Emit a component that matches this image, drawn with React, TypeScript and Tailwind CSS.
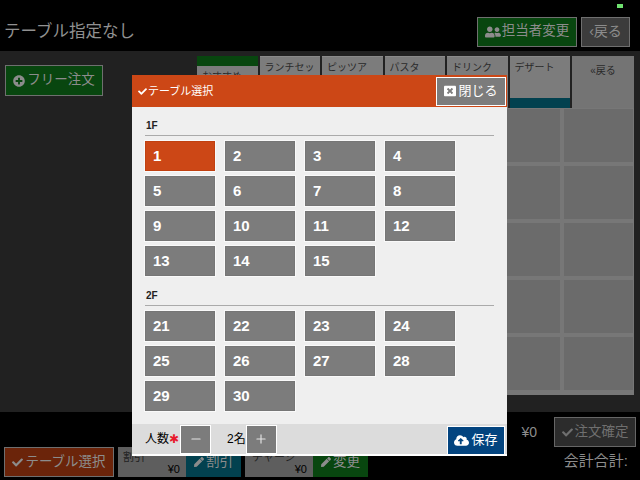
import { Minus, Plus } from 'lucide-react';
import { FaCheck, FaCloudUploadAlt, FaPen, FaPlusCircle, FaUserFriends, FaWindowClose } from 'react-icons/fa';

const FONT = "font-['Liberation_Sans','Noto_Sans_CJK_JP',sans-serif]";

const tabs = [
  { label: 'おすすめ', active: true },
  { label: 'ランチセット' },
  { label: 'ピッツア' },
  { label: 'パスタ' },
  { label: 'ドリンク' },
  { label: 'デザート', teal: true },
];

const floors = [
  { name: '1F', tables: [1, 2, 3, 4, 5, 6, 7, 8, 9, 10, 11, 12, 13, 14, 15] },
  { name: '2F', tables: [21, 22, 23, 24, 25, 26, 27, 28, 29, 30] },
];

const TableButton = ({ n }: { n: number }) => (
  <button
    className={`w-[70px] h-[30px] pl-[7px] flex items-center border text-[15px] font-bold text-white ring-1 ring-white/60 ${
      n === 1 ? 'bg-[#cc4716] border-[#c04010]' : 'bg-[#7c7c7c] border-[#767676]'
    }`}
  >
    {n}
  </button>
);

const TableModal = () => (
  <div className="absolute left-[132px] top-[75px] w-[375px] h-[377px] flex flex-col bg-[#efefef]">
    {/* Title bar */}
    <div className="h-[32px] shrink-0 bg-[#cc4716] flex items-center justify-between pl-[6px] pr-px">
      <div className="flex items-center gap-px text-[11px] text-white">
        <FaCheck size={9} />
        テーブル選択
      </div>
      <button className="w-[70px] h-[29px] border border-white bg-[#7c7c7c] flex items-center justify-center gap-[2px] text-[13px] text-white">
        <FaWindowClose size={12} />
        閉じる
      </button>
    </div>

    {/* Floors */}
    <div className="flex-1 px-[13px] pt-[12px]">
      {floors.map((f) => (
        <div key={f.name} className="mb-[13px]">
          <div className="text-[10px] font-bold leading-[13px] text-[#222] pl-px pb-[3px] border-b border-[#aaa]">{f.name}</div>
          <div className="grid grid-cols-[repeat(4,70px)] gap-x-[10px] gap-y-[5px] mt-[5px]">
            {f.tables.map((n) => (
              <TableButton key={n} n={n} />
            ))}
          </div>
        </div>
      ))}
    </div>

    {/* Footer */}
    <div className="h-[32px] shrink-0 bg-[#dcdcdc] border-b-2 border-white flex items-center pr-[2px]">
      <span className="ml-[13px] text-[12px] text-black">人数</span>
      <span className="w-[9px] text-[12px] text-center text-[#e8192c] leading-none">✱</span>
      <button className="ml-[2px] w-[31px] h-[29px] border border-white bg-[#7c7c7c] flex items-center justify-center text-[#e4e4e4]">
        <Minus size={14} />
      </button>
      <span className="ml-[16px] text-[12px] text-black">2名</span>
      <button className="w-[31px] h-[29px] border border-white bg-[#7c7c7c] flex items-center justify-center text-[#e4e4e4]">
        <Plus size={14} />
      </button>
      <button className="ml-auto mt-[2px] w-[58px] h-[29px] bg-[#03447f] border border-white flex items-center justify-center gap-[2px] text-[13px] text-white">
        <FaCloudUploadAlt size={15} />
        保存
      </button>
    </div>
  </div>
);

const App = () => {
  return (
    <div className={`relative w-[640px] h-[480px] overflow-hidden bg-black ${FONT}`}>
      {/* Top bar */}
      <header className="h-[51px] flex items-center pt-[12px] pl-[4px] pr-[10px] text-[#919191]">
        <h1 className="text-[16.5px] font-normal">テーブル指定なし</h1>
        <button className="ml-auto w-[100px] h-[30px] border border-[#6f6f6f] bg-[#08460f] flex items-center justify-center gap-[1px] text-[13.5px] text-[#8c8c8c]">
          <FaUserFriends size={16} />
          担当者変更
        </button>
        <button className="ml-[4px] w-[49px] h-[30px] border border-[#6f6f6f] bg-[#3c3c3c] text-[14px] text-[#8c8c8c]">
          ‹戻る
        </button>
      </header>

      {/* Main */}
      <main className="h-[361px] bg-[#212121] flex pt-[5px]">
        <div className="w-[197px] pl-[5px] pt-[9px] shrink-0">
          <button className="w-[98px] h-[31px] border border-[#6f6f6f] bg-[#08460f] flex items-center justify-center gap-[2px] text-[13.5px] text-[#8c8c8c]">
            <FaPlusCircle size={12} />
            フリー注文
          </button>
        </div>
        <div className="w-[437px] flex flex-col">
          <div className="flex h-[52px] gap-[2px]">
            {tabs.map((t) => (
              <div
                key={t.label}
                className={`w-[60.5px] h-[52px] flex flex-col text-[10px] leading-[12px] text-[#2a2a2a] ${
                  t.active ? '' : 'border-t border-[#8a8a8a] bg-[#7c7c7c]'
                }`}
              >
                {t.active && <div className="h-[10px] bg-[#08460f]" />}
                <div className={`flex-1 px-[5px] pt-[5px] overflow-hidden ${t.active ? 'bg-[#7c7c7c]' : ''}`}>{t.label}</div>
                {t.teal && <div className="h-[10px] bg-[#02414f]" />}
              </div>
            ))}
            <div className="flex-1 bg-[#747474] text-center text-[10px] leading-[12px] text-[#2a2a2a] pt-[9px]">«戻る</div>
          </div>
          <div className="pt-px pb-[5px] pl-[2px] pr-[3px] grid grid-cols-[repeat(6,69px)] gap-[4px] bg-[#777]">
            {Array.from({ length: 30 }).map((_, i) => (
              <div key={i} className="h-[53px] bg-[#6b6b6b]" />
            ))}
          </div>
        </div>
      </main>

      {/* Bottom bar */}
      <footer className="h-[68px] flex items-start pl-1 text-[#8c8c8c]">
        <button className="mt-[35px] w-[110px] h-[30px] border border-[#6f6f6f] bg-[#6b240a] flex items-center justify-center gap-[2px] text-[13.5px]">
          <FaCheck size={11} />
          テーブル選択
        </button>
        <div className="mt-[35px] ml-[4px] w-[123px] h-[30px] bg-[#5e5e5e] flex">
          <div className="flex-1 flex flex-col text-[11px] leading-[13px] text-[#222] pl-[5px] pr-[6px] pt-[4px]">
            <span>割引</span>
            <span className="-mt-px text-right text-black">¥0</span>
          </div>
          <button className="w-[55px] bg-[#02414f] flex items-center justify-center gap-[2px] text-[13.5px]">
            <FaPen size={10} />
            割引
          </button>
        </div>
        <div className="mt-[35px] ml-[4px] w-[123px] h-[30px] bg-[#5e5e5e] flex">
          <div className="flex-1 flex flex-col text-[11px] leading-[13px] text-[#222] pl-[7px] pr-[6px] pt-[4px]">
            <span>チャージ</span>
            <span className="-mt-px text-right text-black">¥0</span>
          </div>
          <button className="w-[55px] bg-[#08460f] flex items-center justify-center gap-[2px] text-[13.5px]">
            <FaPen size={10} />
            変更
          </button>
        </div>
        <div className="ml-auto flex flex-col items-end pt-[5px] pr-[4px]">
          <div className="flex items-center gap-[17px]">
            <span className="text-[14px]">¥0</span>
            <button className="w-[82px] h-[30px] border border-[#666] bg-[#2c2c2c] flex items-center justify-center gap-[2px] text-[13.5px] text-[#6f6f6f]">
              <FaCheck size={11} />
              注文確定
            </button>
          </div>
          <span className="text-[15px] leading-[20px] mt-[4px] pr-[8px]">会計合計:</span>
        </div>
      </footer>

      {/* status led */}
      <div className="absolute left-[617px] top-[4px] w-[6px] h-[4px] bg-[#6fe06f]" />

      <TableModal />
    </div>
  );
};

export default App;
